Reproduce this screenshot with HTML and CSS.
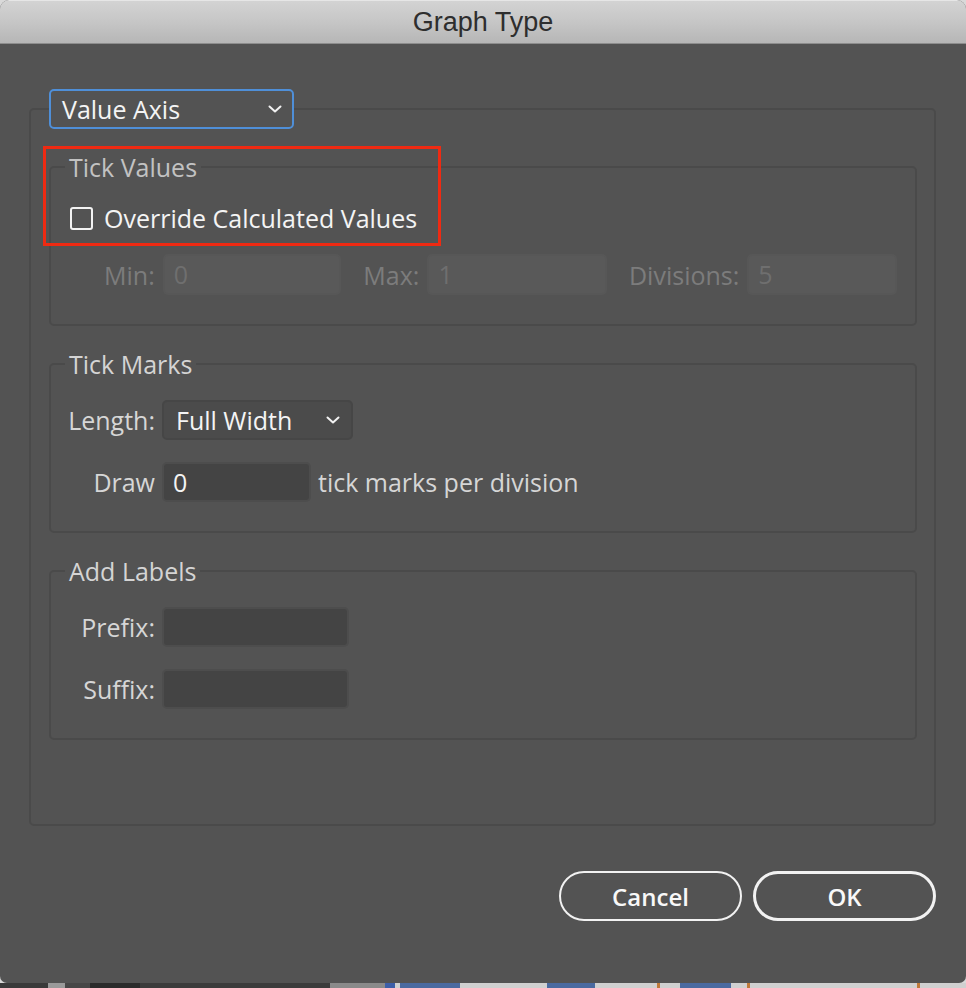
FILE: index.html
```html
<!DOCTYPE html>
<html lang="en">
<head>
<meta charset="utf-8">
<title>Graph Type</title>
<link rel="stylesheet" href="styles.css">
</head>
<body>
<div class="dialog">
  <div class="titlebar">Graph Type</div>
  <div class="content">
    <fieldset class="panel">
      <legend class="panel-legend">
        <div class="select select-focus">
          <span>Value Axis</span>
          <svg class="chev" width="14" height="8" viewBox="0 0 14 8"><polyline points="1.5,1.5 7,6.5 12.5,1.5" fill="none" stroke="#f2f2f2" stroke-width="2" stroke-linecap="round" stroke-linejoin="round"/></svg>
        </div>
      </legend>

      <fieldset class="group group-first">
        <legend class="group-title dim">Tick Values</legend>
        <div class="check-row">
          <span class="checkbox"></span>
          <span class="check-label">Override Calculated Values</span>
        </div>
        <div class="range-row">
          <span class="lbl lbl-col disabled">Min:</span>
          <div class="field field-disabled w-min">0</div>
          <span class="lbl disabled gap-left">Max:</span>
          <div class="field field-disabled w-max">1</div>
          <span class="lbl disabled gap-left">Divisions:</span>
          <div class="field field-disabled w-div">5</div>
        </div>
      </fieldset>

      <fieldset class="group">
        <legend class="group-title">Tick Marks</legend>
        <div class="form-grid">
          <span class="lbl lbl-col">Length:</span>
          <div class="select select-dark">
            <span>Full Width</span>
            <svg class="chev" width="14" height="8" viewBox="0 0 14 8"><polyline points="1.5,1.5 7,6.5 12.5,1.5" fill="none" stroke="#f2f2f2" stroke-width="2" stroke-linecap="round" stroke-linejoin="round"/></svg>
          </div>
          <span class="lbl lbl-col">Draw</span>
          <div class="inline-row">
            <div class="field field-dark w-draw">0</div>
            <span class="lbl after">tick marks per division</span>
          </div>
        </div>
      </fieldset>

      <fieldset class="group">
        <legend class="group-title">Add Labels</legend>
        <div class="form-grid">
          <span class="lbl lbl-col">Prefix:</span>
          <div class="field field-dark w-affix"></div>
          <span class="lbl lbl-col">Suffix:</span>
          <div class="field field-dark w-affix"></div>
        </div>
      </fieldset>
    </fieldset>

    <div class="buttons">
      <button class="btn">Cancel</button>
      <button class="btn btn-default">OK</button>
    </div>

    <div class="annotation"></div>
  </div>
</div>
<div class="backdrop-strip"></div>
</body>
</html>
```

FILE: styles.css
```css
* { box-sizing: border-box; }

html, body {
  margin: 0;
  padding: 0;
}

body {
  width: 966px;
  height: 988px;
  background: #d9d9d9;
  font-family: "Open Sans", "Noto Sans", sans-serif;
  font-weight: 500;
  overflow: hidden;
}

.dialog {
  width: 966px;
  height: 983px;
  background: #535353;
  border-radius: 9px 9px 7px 7px;
  overflow: hidden;
  display: flex;
  flex-direction: column;
}

.titlebar {
  height: 44px;
  flex: none;
  background: linear-gradient(to bottom, #d3d3d3 0%, #c6c6c6 50%, #b6b6b6 100%);
  border-top: 1px solid #e6e6e6;
  border-bottom: 1px solid #8d8d8d;
  color: #2e2e2e;
  font-family: "Liberation Sans", Arial, sans-serif;
  font-weight: 400;
  font-size: 27px;
  line-height: 43px;
  text-align: center;
}

.content {
  position: relative;
  padding-top: 45px;
  flex: 1;
}

/* outer panel */
.panel {
  margin: 0 0 0 29px;
  width: 907px;
  border: 2px solid #4a4a4a;
  border-radius: 5px;
  padding: 23px 17px 84px 18px;
  min-width: 0;
}

.panel-legend {
  padding: 0;
  margin: 0;
}

.select {
  display: flex;
  align-items: center;
  justify-content: space-between;
  height: 40px;
  border-radius: 5px;
  color: #f4f4f4;
  font-size: 25px;
  line-height: 34px;
}

.select-focus {
  width: 245px;
  border: 2px solid #4f8fd8;
  background: #535353;
  padding: 0 10px 0 11px;
}

.select-dark {
  width: 191px;
  border: 2px solid #464646;
  background: #4b4b4b;
  padding: 0 11px 0 12px;
}

.chev { display: block; }

/* groups */
.group {
  margin: 23px 0 0 0;
  border: 2px solid #4a4a4a;
  border-radius: 5px;
  padding: 21px 18px 29px 14px;
  min-width: 0;
}

.group-first { margin-top: 0; }

.group-title {
  padding: 0 4px;
  font-size: 25px;
  line-height: 30px;
  color: #d4d4d4;
}

.group-title.dim { color: #c2c2c2; }

.check-row {
  display: flex;
  align-items: center;
  height: 30px;
  margin-left: 5px;
}

.checkbox {
  width: 23px;
  height: 23px;
  border: 2px solid #f2f2f2;
  border-radius: 3px;
  flex: none;
}

.check-label {
  margin-left: 11px;
  color: #f4f4f4;
  font-size: 25px;
  line-height: 30px;
}

.range-row {
  display: flex;
  align-items: center;
  margin-top: 21px;
  gap: 8px;
}

.lbl {
  font-size: 25px;
  line-height: 30px;
  color: #d6d6d6;
  white-space: nowrap;
}

.lbl-col {
  width: 90px;
  text-align: right;
}

.disabled { color: #7c7c7c; }

.gap-left { margin-left: 14px; }

.field {
  height: 41px;
  border-radius: 5px;
  font-size: 25px;
  line-height: 37px;
  padding: 0 9px;
  color: #f4f4f4;
}

.field-disabled {
  background: #595959;
  border: 2px solid #575757;
  color: #6f6f6f;
}

.w-min { width: 179px; }
.w-max { width: 180px; }
.w-div { width: 150px; }
.w-draw { width: 149px; }
.w-affix { width: 187px; }

.field-dark {
  background: #444444;
  border: 2px solid #4d4d4d;
  height: 40px;
  line-height: 36px;
}

.form-grid {
  display: grid;
  grid-template-columns: 90px auto;
  column-gap: 7px;
  row-gap: 22px;
  align-items: center;
  justify-items: start;
}

.form-grid .lbl-col { justify-self: end; }

.inline-row {
  display: flex;
  align-items: center;
  gap: 7px;
}

/* buttons */
.buttons {
  display: flex;
  justify-content: flex-end;
  gap: 11px;
  width: 936px;
  margin-top: 45px;
}

.btn {
  width: 183px;
  height: 50px;
  border: 2px solid #f2f2f2;
  border-radius: 25px;
  background: transparent;
  color: #f8f8f8;
  font-family: "Open Sans", "Noto Sans", sans-serif;
  font-size: 24px;
  font-weight: 600;
  padding: 0;
}

.btn-default { border-width: 3px; }

/* red annotation rectangle drawn over the screenshot */
.annotation {
  position: absolute;
  left: 43px;
  top: 102px;
  width: 398px;
  height: 100px;
  border: 3px solid #ef2a12;
  pointer-events: none;
}

.backdrop-strip {
  height: 5px;
  background: linear-gradient(to right,
    #3a3a3a 0 48px, #9a9a9a 48px 65px, #474747 65px 90px, #2b2b2b 90px 140px,
    #3c3c3c 140px 330px, #8a8a8a 330px 385px, #3d5fa8 385px 395px, #d0d0d0 395px 400px,
    #4a6aa0 400px 460px, #d0d0d0 460px 547px, #4a6aa0 547px 595px, #d0d0d0 595px 657px,
    #c07a3a 657px 660px, #d0d0d0 660px 680px, #4a6aa0 680px 731px, #d0d0d0 731px 747px,
    #c07a3a 747px 750px, #d0d0d0 750px 917px, #c07a3a 917px 920px, #d0d0d0 920px);
}
```
